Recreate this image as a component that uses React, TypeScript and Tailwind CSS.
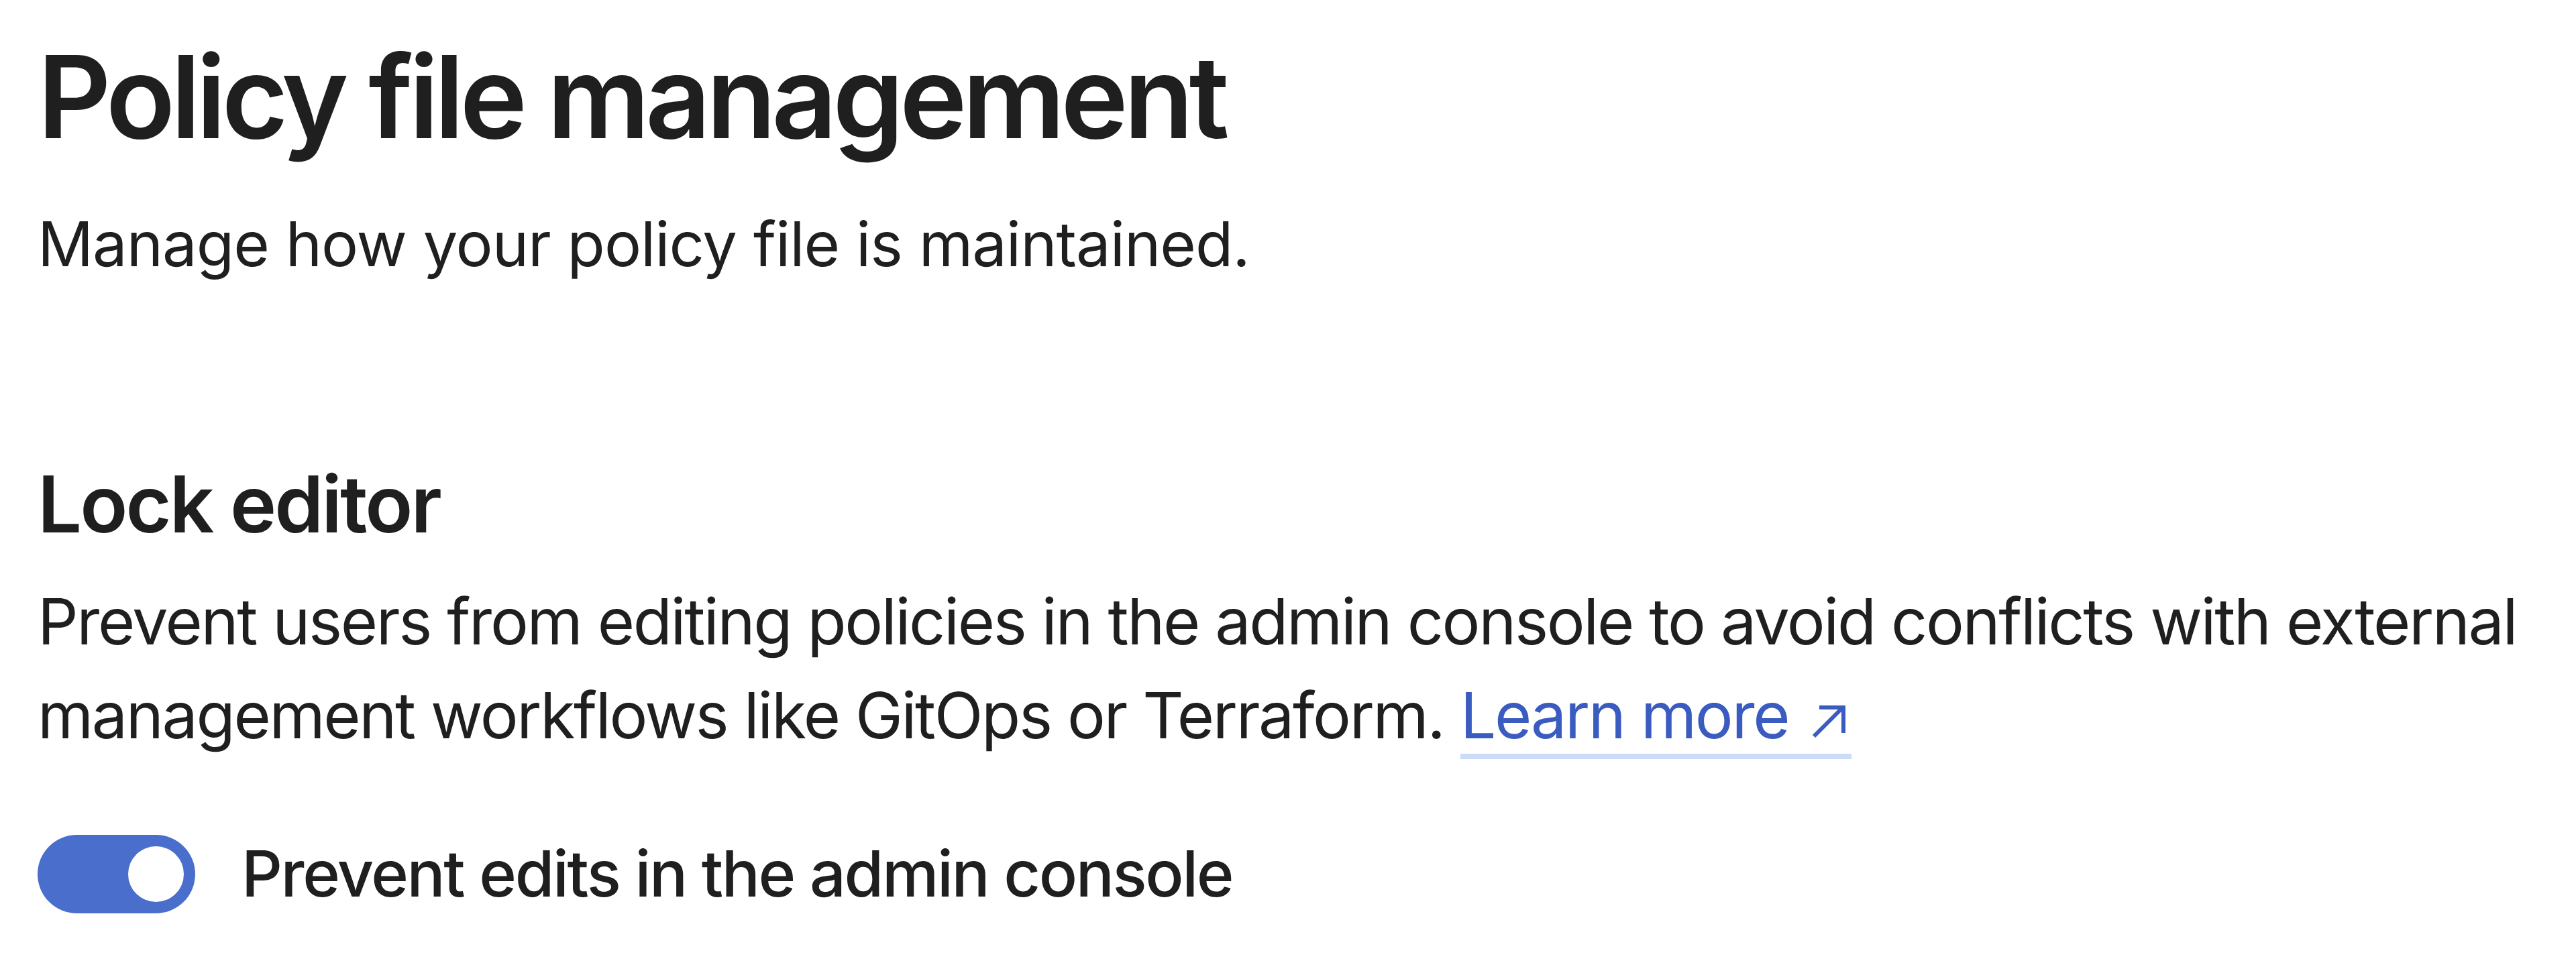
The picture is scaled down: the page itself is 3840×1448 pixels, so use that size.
export default function App() {
  return (
    <div className="min-h-[1448px] bg-white pl-[56px] pr-[40px] pt-[42px] text-[#1f1f1f] [font-family:Inter,'Noto_Sans',sans-serif]">
      <h1 className="text-[170px] font-semibold leading-[204px] tracking-[-0.039em]">
        Policy file management
      </h1>
      <p className="mt-[49px] text-[92px] leading-[138px] tracking-[-0.011em]">
        Manage how your policy file is maintained.
      </p>

      <h2 className="mt-[249px] text-[117px] font-semibold leading-[140px] tracking-[-0.025em]">
        Lock editor
      </h2>
      <p className="mt-[35px] text-[95px] leading-[140px] tracking-[-0.025em]">
        Prevent users from editing policies in the admin console to avoid conflicts with external
        management workflows like GitOps or Terraform.{" "}
        <a href="#" className="border-b-[8px] border-[#cddbfb] pr-[8px] text-[#3a5bbf]">
          Learn more
          <svg
            className="ml-[34px] inline-block h-[50px] w-[52px] align-baseline"
            viewBox="0 0 52 50"
            fill="none"
            stroke="currentColor"
            strokeWidth="6"
          >
            <path d="M4 47 L47 4" />
            <path d="M12 4 H48 V42" />
          </svg>
        </a>
      </p>

      <div className="mt-[96px] flex items-center gap-[69px]">
        <button
          type="button"
          role="switch"
          aria-checked="true"
          className="flex h-[117px] w-[235px] items-center justify-end rounded-full bg-[#4a6ecb] pr-[17px]"
        >
          <span className="block h-[83px] w-[83px] rounded-full bg-white" />
        </button>
        <span className="text-[95px] font-medium leading-[140px] tracking-[-0.025em]">
          Prevent edits in the admin console
        </span>
      </div>
    </div>
  );
}
